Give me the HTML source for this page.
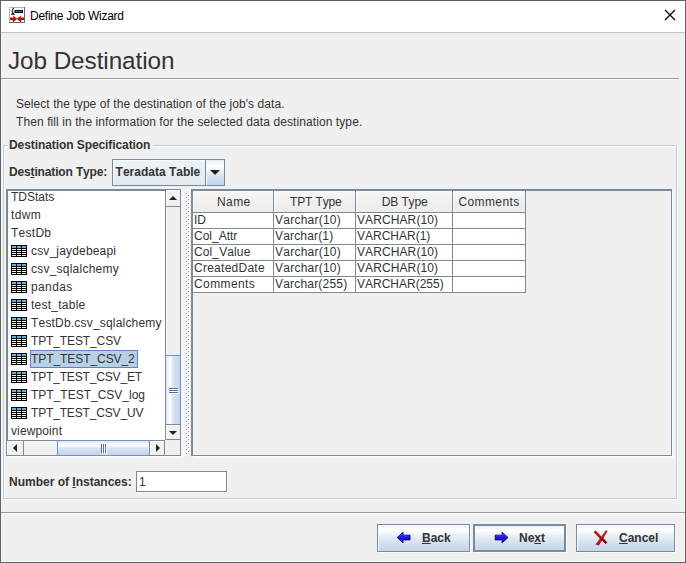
<!DOCTYPE html>
<html>
<head>
<meta charset="utf-8">
<title>Define Job Wizard</title>
<style>
html,body{margin:0;padding:0;}
body{font-kerning:none;width:686px;height:563px;overflow:hidden;background:#f0f0f0;font-family:"Liberation Sans",sans-serif;font-size:12px;color:#333;position:relative;}
.abs{position:absolute;}
#win{position:absolute;left:0;top:0;width:684px;height:561px;border:1px solid #626262;background:#f0f0f0;box-shadow:inset -1px -1px 0 #fff, inset 1px 0 0 #f8f8f8;}
#titlebar{position:absolute;left:1px;top:1px;width:684px;height:31px;background:#fff;border-bottom:1px solid #c4c4c4;}
#title{position:absolute;left:30px;top:9px;font-size:12px;color:#000;line-height:14px;white-space:nowrap;letter-spacing:-0.25px;}
#h1{position:absolute;left:8px;top:45.5px;font-size:24.3px;line-height:30px;color:#333;white-space:nowrap;letter-spacing:-0.07px;}
.hline{position:absolute;height:1px;background:#9a9a9a;box-shadow:0 1px 0 #fcfcfc;}
.t{position:absolute;white-space:nowrap;line-height:14px;font-size:12px;color:#333;}
.b{font-weight:bold;}
#group{position:absolute;left:3px;top:145px;width:674px;height:354px;box-sizing:border-box;border:1px solid #b8cfe5;box-shadow:inset 1px 1px 0 #fbfcfd, 1px 1px 0 #fbfcfd;}
#gtitle{position:absolute;left:8px;top:138px;background:#f0f0f0;padding:0 3px 0 1px;font-weight:bold;line-height:14px;letter-spacing:-0.08px;}
#combo{position:absolute;left:112px;top:159px;width:113px;height:27px;border:1px solid #7a8a99;box-sizing:border-box;background:linear-gradient(#eef2f7,#e8edf3 50%,#e3e9f0);box-shadow:inset 1px 1px 0 #f7f9fc;}
#combo .txt{position:absolute;left:2.6px;top:5px;font-weight:bold;line-height:14px;white-space:nowrap;}
#combo .btn{position:absolute;right:0;top:0;width:18px;height:25px;border-left:1px solid #7a8a99;background:linear-gradient(#e4ecf6,#fdfeff 25%,#dbe6f2 60%,#c3d5e9);box-shadow:inset 1px 0 0 #f4f8fc;}
#list{position:absolute;left:6px;top:189px;width:175px;height:267px;border:1px solid #7a8a99;box-sizing:border-box;background:#fff;box-shadow:inset 1px 1px 0 #7a8a99, 2px 2px 0 #f8f9fb;}
.li{position:absolute;left:4px;white-space:nowrap;line-height:14px;font-size:12px;color:#333;}
.ico{position:absolute;left:4px;width:16px;height:12px;}
#tablepane{position:absolute;left:191px;top:189px;width:481px;height:267px;border:1px solid #7a8a99;border-left-width:2px;border-top-width:2px;box-sizing:border-box;background:#f0f0f0;box-shadow:2px 2px 0 #f8f9fb;}
.btnx{position:absolute;top:524px;height:28px;box-sizing:border-box;border:1px solid #7a8a99;background:linear-gradient(#e9f0f8 0%,#ffffff 18%,#e6edf6 45%,#d3e0ee 70%,#c4d5e8 100%);box-shadow:inset 1px 1px 0 rgba(255,255,255,.9), 1px 1px 0 #fafbfc;}
.btnx.dflt{border:2px solid #7a8a99;box-shadow:1px 1px 0 #fafbfc;}
.btnx.dflt span{margin:-1px 0 0 -1px;}
.btnx span{position:absolute;top:6px;font-weight:bold;line-height:14px;white-space:nowrap;}

#listview{position:absolute;left:0;top:0;width:158px;height:250px;overflow:hidden;}
.sel{position:absolute;left:23px;width:108px;height:18px;box-sizing:border-box;background:#b8cfe5;border:1px solid #6382bf;}
.sb{position:absolute;box-sizing:border-box;}
.sbtn{position:absolute;box-sizing:border-box;background:#f0f0f0;border:1px solid #7a8a99;box-shadow:inset 1px 1px 0 #fff;}
.track{position:absolute;box-sizing:border-box;background:#f0f0f0;border:1px solid #7a8a99;box-shadow:inset 1px 1px 0 #fafafa;}
.thumbv{position:absolute;box-sizing:border-box;border:1px solid #7390c4;background:linear-gradient(to right,#dbe6f3 0%,#ffffff 30%,#d5e2f1 55%,#c3d5ea 100%);}
.thumbh{position:absolute;box-sizing:border-box;border:1px solid #7390c4;background:linear-gradient(to bottom,#dbe6f3 0%,#ffffff 30%,#d5e2f1 55%,#c3d5ea 100%);}
#divider{position:absolute;left:181px;top:189px;width:10px;height:267px;background:#f5f7f9;}
table.jt{position:absolute;left:0;top:0;border-collapse:collapse;table-layout:fixed;}
.cell{position:absolute;white-space:nowrap;line-height:14px;font-size:12px;color:#333;}
.vline{position:absolute;width:1px;background:#7a8a99;}
.hl{position:absolute;height:1px;background:#7a8a99;}
u{text-decoration:underline;}
</style>
</head>
<body>
<div id="win"></div>
<div id="titlebar"></div>
<svg class="abs" style="left:9px;top:7px" width="16" height="16" viewBox="9 7 16 16">
  <rect x="9" y="7" width="16" height="16" fill="#fff"/>
  <path d="M9.5 23 V7.5 H25" fill="none" stroke="#b4b4b4" stroke-width="1"/>
  <path d="M24.5 7 V22.5 H9" fill="none" stroke="#666" stroke-width="1"/>
  <rect x="14.5" y="10" width="8.5" height="3" fill="#05051e"/>
  <rect x="16" y="11" width="6" height="1" fill="#2f62ff"/>
  <path d="M14 8 C12.3 9.2 11.8 11 12.4 12.8" fill="none" stroke="#444" stroke-width="1.1"/>
  <path d="M13.6 9.5 L13.6 12.8" fill="none" stroke="#bbb" stroke-width="0.9"/>
  <path d="M10.8 14.8 L13 12.2 L15.2 14.8 Z" fill="#000"/>
  <path d="M10 17.6 L13.2 17.6 L13.2 15.6 L17 18.8 L20.8 15.6 L20.8 17.6 L24 17.6 L24 20 L20.8 20 L20.8 22 L17 18.9 L13.2 22 L13.2 20 L10 20 Z" fill="#cf1414"/>
  <path d="M10 19.3 L13.2 19.3 L13.2 21.6 L16.4 18.9 M24 19.3 L20.8 19.3 L20.8 21.6 L17.6 18.9" fill="none" stroke="#8e0505" stroke-width="0.8"/>
</svg>
<div id="title">Define Job Wizard</div>
<svg class="abs" style="left:664px;top:9px" width="12" height="12" viewBox="0 0 12 12"><path d="M1 1 L11 11 M11 1 L1 11" stroke="#000" stroke-width="1.25" fill="none"/></svg>

<div id="h1">Job Destination</div>
<div class="hline" style="left:1px;top:78px;width:678px;"></div>
<div class="t" style="left:16px;top:97px;letter-spacing:0.065px;">Select the type of the destination of the job's data.</div>
<div class="t" style="left:16px;top:115px;letter-spacing:0.09px;">Then fill in the information for the selected data destination type.</div>

<div id="group"></div>
<div id="gtitle">Destination Specification</div>
<div class="t b" style="left:9px;top:165px;letter-spacing:-0.15px;">Des<u>t</u>ination Type:</div>
<div id="combo"><div class="txt">Teradata Table</div><div class="btn"><svg class="abs" style="left:4px;top:10px" width="10" height="5"><path d="M0 0 L10 0 L5 5 Z" fill="#222"/></svg></div></div>

<div id="list"><div id="listview"><div class="li" style="left:4px;top:0px">TDStats</div>
<div class="li" style="left:4px;top:18px;letter-spacing:0.4px">tdwm</div>
<div class="li" style="left:4px;top:36px;letter-spacing:0.26px">TestDb</div>
<svg class="ico" style="top:55px" width="16" height="12" viewBox="0 0 16 12"><rect width="16" height="12" fill="#000"/><g fill="#5ab4ea"><rect x="1" y="1" width="4" height="2"/><rect x="6" y="1" width="4" height="2"/><rect x="11" y="1" width="4" height="2"/></g><g fill="#ffffc4"><rect x="1" y="4" width="4" height="1"/><rect x="6" y="4" width="4" height="1"/><rect x="11" y="4" width="4" height="1"/><rect x="1" y="6" width="4" height="1"/><rect x="6" y="6" width="4" height="1"/><rect x="11" y="6" width="4" height="1"/><rect x="1" y="8" width="4" height="1"/><rect x="6" y="8" width="4" height="1"/><rect x="11" y="8" width="4" height="1"/><rect x="1" y="10" width="4" height="1"/><rect x="6" y="10" width="4" height="1"/><rect x="11" y="10" width="4" height="1"/></g></svg>
<div class="li" style="left:24px;top:54px;letter-spacing:0.17px">csv_jaydebeapi</div>
<svg class="ico" style="top:73px" width="16" height="12" viewBox="0 0 16 12"><rect width="16" height="12" fill="#000"/><g fill="#5ab4ea"><rect x="1" y="1" width="4" height="2"/><rect x="6" y="1" width="4" height="2"/><rect x="11" y="1" width="4" height="2"/></g><g fill="#ffffc4"><rect x="1" y="4" width="4" height="1"/><rect x="6" y="4" width="4" height="1"/><rect x="11" y="4" width="4" height="1"/><rect x="1" y="6" width="4" height="1"/><rect x="6" y="6" width="4" height="1"/><rect x="11" y="6" width="4" height="1"/><rect x="1" y="8" width="4" height="1"/><rect x="6" y="8" width="4" height="1"/><rect x="11" y="8" width="4" height="1"/><rect x="1" y="10" width="4" height="1"/><rect x="6" y="10" width="4" height="1"/><rect x="11" y="10" width="4" height="1"/></g></svg>
<div class="li" style="left:24px;top:72px;letter-spacing:0.23px">csv_sqlalchemy</div>
<svg class="ico" style="top:91px" width="16" height="12" viewBox="0 0 16 12"><rect width="16" height="12" fill="#000"/><g fill="#5ab4ea"><rect x="1" y="1" width="4" height="2"/><rect x="6" y="1" width="4" height="2"/><rect x="11" y="1" width="4" height="2"/></g><g fill="#ffffc4"><rect x="1" y="4" width="4" height="1"/><rect x="6" y="4" width="4" height="1"/><rect x="11" y="4" width="4" height="1"/><rect x="1" y="6" width="4" height="1"/><rect x="6" y="6" width="4" height="1"/><rect x="11" y="6" width="4" height="1"/><rect x="1" y="8" width="4" height="1"/><rect x="6" y="8" width="4" height="1"/><rect x="11" y="8" width="4" height="1"/><rect x="1" y="10" width="4" height="1"/><rect x="6" y="10" width="4" height="1"/><rect x="11" y="10" width="4" height="1"/></g></svg>
<div class="li" style="left:24px;top:90px;letter-spacing:0.38px">pandas</div>
<svg class="ico" style="top:109px" width="16" height="12" viewBox="0 0 16 12"><rect width="16" height="12" fill="#000"/><g fill="#5ab4ea"><rect x="1" y="1" width="4" height="2"/><rect x="6" y="1" width="4" height="2"/><rect x="11" y="1" width="4" height="2"/></g><g fill="#ffffc4"><rect x="1" y="4" width="4" height="1"/><rect x="6" y="4" width="4" height="1"/><rect x="11" y="4" width="4" height="1"/><rect x="1" y="6" width="4" height="1"/><rect x="6" y="6" width="4" height="1"/><rect x="11" y="6" width="4" height="1"/><rect x="1" y="8" width="4" height="1"/><rect x="6" y="8" width="4" height="1"/><rect x="11" y="8" width="4" height="1"/><rect x="1" y="10" width="4" height="1"/><rect x="6" y="10" width="4" height="1"/><rect x="11" y="10" width="4" height="1"/></g></svg>
<div class="li" style="left:24px;top:108px;letter-spacing:0.25px">test_table</div>
<svg class="ico" style="top:127px" width="16" height="12" viewBox="0 0 16 12"><rect width="16" height="12" fill="#000"/><g fill="#5ab4ea"><rect x="1" y="1" width="4" height="2"/><rect x="6" y="1" width="4" height="2"/><rect x="11" y="1" width="4" height="2"/></g><g fill="#ffffc4"><rect x="1" y="4" width="4" height="1"/><rect x="6" y="4" width="4" height="1"/><rect x="11" y="4" width="4" height="1"/><rect x="1" y="6" width="4" height="1"/><rect x="6" y="6" width="4" height="1"/><rect x="11" y="6" width="4" height="1"/><rect x="1" y="8" width="4" height="1"/><rect x="6" y="8" width="4" height="1"/><rect x="11" y="8" width="4" height="1"/><rect x="1" y="10" width="4" height="1"/><rect x="6" y="10" width="4" height="1"/><rect x="11" y="10" width="4" height="1"/></g></svg>
<div class="li" style="left:24px;top:126px;letter-spacing:0.19px">TestDb.csv_sqlalchemy</div>
<svg class="ico" style="top:145px" width="16" height="12" viewBox="0 0 16 12"><rect width="16" height="12" fill="#000"/><g fill="#5ab4ea"><rect x="1" y="1" width="4" height="2"/><rect x="6" y="1" width="4" height="2"/><rect x="11" y="1" width="4" height="2"/></g><g fill="#ffffc4"><rect x="1" y="4" width="4" height="1"/><rect x="6" y="4" width="4" height="1"/><rect x="11" y="4" width="4" height="1"/><rect x="1" y="6" width="4" height="1"/><rect x="6" y="6" width="4" height="1"/><rect x="11" y="6" width="4" height="1"/><rect x="1" y="8" width="4" height="1"/><rect x="6" y="8" width="4" height="1"/><rect x="11" y="8" width="4" height="1"/><rect x="1" y="10" width="4" height="1"/><rect x="6" y="10" width="4" height="1"/><rect x="11" y="10" width="4" height="1"/></g></svg>
<div class="li" style="left:24px;top:144px;letter-spacing:-0.12px">TPT_TEST_CSV</div>
<svg class="ico" style="top:163px" width="16" height="12" viewBox="0 0 16 12"><rect width="16" height="12" fill="#000"/><g fill="#5ab4ea"><rect x="1" y="1" width="4" height="2"/><rect x="6" y="1" width="4" height="2"/><rect x="11" y="1" width="4" height="2"/></g><g fill="#ffffc4"><rect x="1" y="4" width="4" height="1"/><rect x="6" y="4" width="4" height="1"/><rect x="11" y="4" width="4" height="1"/><rect x="1" y="6" width="4" height="1"/><rect x="6" y="6" width="4" height="1"/><rect x="11" y="6" width="4" height="1"/><rect x="1" y="8" width="4" height="1"/><rect x="6" y="8" width="4" height="1"/><rect x="11" y="8" width="4" height="1"/><rect x="1" y="10" width="4" height="1"/><rect x="6" y="10" width="4" height="1"/><rect x="11" y="10" width="4" height="1"/></g></svg>
<div class="sel" style="top:160px"></div>
<div class="li" style="left:24px;top:162px;letter-spacing:-0.07px">TPT_TEST_CSV_2</div>
<svg class="ico" style="top:181px" width="16" height="12" viewBox="0 0 16 12"><rect width="16" height="12" fill="#000"/><g fill="#5ab4ea"><rect x="1" y="1" width="4" height="2"/><rect x="6" y="1" width="4" height="2"/><rect x="11" y="1" width="4" height="2"/></g><g fill="#ffffc4"><rect x="1" y="4" width="4" height="1"/><rect x="6" y="4" width="4" height="1"/><rect x="11" y="4" width="4" height="1"/><rect x="1" y="6" width="4" height="1"/><rect x="6" y="6" width="4" height="1"/><rect x="11" y="6" width="4" height="1"/><rect x="1" y="8" width="4" height="1"/><rect x="6" y="8" width="4" height="1"/><rect x="11" y="8" width="4" height="1"/><rect x="1" y="10" width="4" height="1"/><rect x="6" y="10" width="4" height="1"/><rect x="11" y="10" width="4" height="1"/></g></svg>
<div class="li" style="left:24px;top:180px;letter-spacing:-0.16px">TPT_TEST_CSV_ET</div>
<svg class="ico" style="top:199px" width="16" height="12" viewBox="0 0 16 12"><rect width="16" height="12" fill="#000"/><g fill="#5ab4ea"><rect x="1" y="1" width="4" height="2"/><rect x="6" y="1" width="4" height="2"/><rect x="11" y="1" width="4" height="2"/></g><g fill="#ffffc4"><rect x="1" y="4" width="4" height="1"/><rect x="6" y="4" width="4" height="1"/><rect x="11" y="4" width="4" height="1"/><rect x="1" y="6" width="4" height="1"/><rect x="6" y="6" width="4" height="1"/><rect x="11" y="6" width="4" height="1"/><rect x="1" y="8" width="4" height="1"/><rect x="6" y="8" width="4" height="1"/><rect x="11" y="8" width="4" height="1"/><rect x="1" y="10" width="4" height="1"/><rect x="6" y="10" width="4" height="1"/><rect x="11" y="10" width="4" height="1"/></g></svg>
<div class="li" style="left:24px;top:198px">TPT_TEST_CSV_log</div>
<svg class="ico" style="top:217px" width="16" height="12" viewBox="0 0 16 12"><rect width="16" height="12" fill="#000"/><g fill="#5ab4ea"><rect x="1" y="1" width="4" height="2"/><rect x="6" y="1" width="4" height="2"/><rect x="11" y="1" width="4" height="2"/></g><g fill="#ffffc4"><rect x="1" y="4" width="4" height="1"/><rect x="6" y="4" width="4" height="1"/><rect x="11" y="4" width="4" height="1"/><rect x="1" y="6" width="4" height="1"/><rect x="6" y="6" width="4" height="1"/><rect x="11" y="6" width="4" height="1"/><rect x="1" y="8" width="4" height="1"/><rect x="6" y="8" width="4" height="1"/><rect x="11" y="8" width="4" height="1"/><rect x="1" y="10" width="4" height="1"/><rect x="6" y="10" width="4" height="1"/><rect x="11" y="10" width="4" height="1"/></g></svg>
<div class="li" style="left:24px;top:216px;letter-spacing:-0.16px">TPT_TEST_CSV_UV</div>
<div class="li" style="left:4px;top:234px;letter-spacing:0.12px">viewpoint</div></div>
<!--SCROLLBARS--></div>

<!-- vertical scrollbar -->
<div class="track" style="left:165px;top:189px;width:16px;height:251px;"></div>
<div class="sbtn" style="left:165px;top:189px;width:16px;height:18px;"><svg class="abs" style="left:3px;top:6px" width="8" height="4"><path d="M0 4 L4 0 L8 4 Z" fill="#222"/></svg></div>
<div class="thumbv" style="left:165px;top:355px;width:16px;height:70px;"><svg class="abs" style="left:3px;top:32px" width="10" height="6"><path d="M1 1.5H10M1 3.5H10M1 5.5H10" stroke="#fff" stroke-width="1"/><path d="M0 0.5H9M0 2.5H9M0 4.5H9" stroke="#5b6f9f" stroke-width="1"/></svg></div>
<div class="sbtn" style="left:165px;top:424px;width:16px;height:16px;"><svg class="abs" style="left:3px;top:6px" width="8" height="4"><path d="M0 0 L8 0 L4 4 Z" fill="#222"/></svg></div>
<!-- horizontal scrollbar -->
<div class="track" style="left:6px;top:440px;width:159px;height:16px;"></div>
<div class="sbtn" style="left:6px;top:440px;width:18px;height:16px;"><svg class="abs" style="left:6px;top:3px" width="4" height="8"><path d="M4 0 L4 8 L0 4 Z" fill="#222"/></svg></div>
<div class="thumbh" style="left:57px;top:440px;width:93px;height:16px;"><svg class="abs" style="left:43px;top:3px" width="6" height="10"><path d="M1.5 1V10M3.5 1V10M5.5 1V10" stroke="#fff" stroke-width="1"/><path d="M0.5 0V9M2.5 0V9M4.5 0V9" stroke="#5b6f9f" stroke-width="1"/></svg></div>
<div class="sbtn" style="left:149px;top:440px;width:16px;height:16px;"><svg class="abs" style="left:6px;top:3px" width="4" height="8"><path d="M0 0 L0 8 L4 4 Z" fill="#222"/></svg></div>
<div class="abs" style="left:165px;top:440px;width:15px;height:15px;background:#f0f0f0;"></div>
<!-- divider -->
<div id="divider"><svg class="abs" style="left:0;top:0" width="10" height="267"><defs><pattern id="dots" x="0" y="0" width="10" height="4" patternUnits="userSpaceOnUse"><rect x="5" y="0" width="1" height="1" fill="#8e8e8e"/><rect x="7" y="2" width="1" height="1" fill="#8e8e8e"/></pattern></defs><rect x="0" y="4" width="10" height="262" fill="url(#dots)"/></svg></div>
<div id="tablepane"><div class="abs" style="left:0;top:0;width:333px;height:21px;background:linear-gradient(#f6f6f6,#f0f0f0 50%,#ececec);"></div><div class="abs" style="left:0px;top:0;width:1px;height:21px;background:#fdfdfd;"></div><div class="abs" style="left:81px;top:0;width:1px;height:21px;background:#fdfdfd;"></div><div class="abs" style="left:163px;top:0;width:1px;height:21px;background:#fdfdfd;"></div><div class="abs" style="left:260px;top:0;width:1px;height:21px;background:#fdfdfd;"></div><div class="abs" style="left:0;top:0;width:333px;height:1px;background:#fdfdfd;"></div>
<div class="abs" style="left:0;top:21px;width:333px;height:81px;background:#fff;"></div>
<div class="vline" style="left:80px;top:0;height:102px;"></div>
<div class="vline" style="left:162px;top:0;height:102px;"></div>
<div class="vline" style="left:259px;top:0;height:102px;"></div>
<div class="vline" style="left:332px;top:0;height:102px;"></div>
<div class="hl" style="left:0;top:21px;width:333px;"></div>
<div class="hl" style="left:0;top:37px;width:333px;"></div>
<div class="hl" style="left:0;top:53px;width:333px;"></div>
<div class="hl" style="left:0;top:69px;width:333px;"></div>
<div class="hl" style="left:0;top:85px;width:333px;"></div>
<div class="hl" style="left:0;top:101px;width:333px;"></div>
<div class="cell" style="left:0.8px;top:4px;width:80px;text-align:center;letter-spacing:0.45px;">Name</div>
<div class="cell" style="left:82.3px;top:4px;width:81px;text-align:center;letter-spacing:-0.15px;">TPT Type</div>
<div class="cell" style="left:163.7px;top:4px;width:96px;text-align:center;letter-spacing:-0.1px;">DB Type</div>
<div class="cell" style="left:260px;top:4px;width:72px;text-align:center;letter-spacing:0.4px;">Comments</div>
<div class="cell" style="left:1px;top:22px;">ID</div>
<div class="cell" style="left:82px;top:22px;letter-spacing:0.24px;">Varchar(10)</div>
<div class="cell" style="left:164px;top:22px;letter-spacing:0.1px;">VARCHAR(10)</div>
<div class="cell" style="left:1px;top:38px;">Col_Attr</div>
<div class="cell" style="left:82px;top:38px;letter-spacing:0.17px;">Varchar(1)</div>
<div class="cell" style="left:164px;top:38px;">VARCHAR(1)</div>
<div class="cell" style="left:1px;top:54px;letter-spacing:0.12px;">Col_Value</div>
<div class="cell" style="left:82px;top:54px;letter-spacing:0.24px;">Varchar(10)</div>
<div class="cell" style="left:164px;top:54px;letter-spacing:0.1px;">VARCHAR(10)</div>
<div class="cell" style="left:1px;top:70px;letter-spacing:0.26px;">CreatedDate</div>
<div class="cell" style="left:82px;top:70px;letter-spacing:0.24px;">Varchar(10)</div>
<div class="cell" style="left:164px;top:70px;letter-spacing:0.1px;">VARCHAR(10)</div>
<div class="cell" style="left:1px;top:86px;letter-spacing:0.4px;">Comments</div>
<div class="cell" style="left:82px;top:86px;letter-spacing:0.19px;">Varchar(255)</div>
<div class="cell" style="left:164px;top:86px;">VARCHAR(255)</div></div>

<div class="t b" style="left:9px;top:475px;">Number of <u>I</u>nstances:</div>
<div class="abs" style="left:136px;top:471px;width:91px;height:21px;box-sizing:border-box;border:1px solid #7a8a99;background:#fff;box-shadow:1px 1px 0 #fbfbfb;"><div class="t" style="left:2px;top:3px;">1</div></div>

<div class="hline" style="left:1px;top:512px;width:684px;"></div>

<div class="btnx" style="left:377px;width:93px;"><span style="left:44px;"><u>B</u>ack</span></div>
<div class="btnx dflt" style="left:473px;width:93px;"><span style="left:45px;">Ne<u>x</u>t</span></div>
<div class="btnx" style="left:576px;width:99px;"><span style="left:42px;"><u>C</u>ancel</span></div>
<svg class="abs" style="left:390px;top:526px" width="30" height="24" viewBox="390 526 30 24">
  <path d="M397.2 537.5 L403 532.2 L403 535.2 L410 535.2 L410 539.9 L403 539.9 L403 542.9 Z" fill="#1616e8" stroke="#050560" stroke-width="0.9" stroke-linejoin="miter"/>
  <path d="M398.5 537.2 L402.3 533.8 L402.3 536 L409.3 536" fill="none" stroke="#4a4af4" stroke-width="0.8"/>
</svg>
<svg class="abs" style="left:488px;top:526px" width="30" height="24" viewBox="488 526 30 24">
  <path d="M508 537.5 L502.1 532.2 L502.1 535.2 L495.2 535.2 L495.2 539.9 L502.1 539.9 L502.1 542.9 Z" fill="#1616e8" stroke="#050560" stroke-width="0.9" stroke-linejoin="miter"/>
  <path d="M496 536 L502.8 536 L502.8 534 L506.6 537.3" fill="none" stroke="#4a4af4" stroke-width="0.8"/>
</svg>
<svg class="abs" style="left:588px;top:526px" width="26" height="24" viewBox="588 526 26 24">
  <path d="M593.7 531.9 L595.5 530.5 L607.4 542.2 L605.6 543.9 Z" fill="#c21313"/>
  <path d="M606.1 530.1 L607.3 531 L598.6 545.6 L595.4 544.4 Z" fill="#d31a1a"/>
  <path d="M594 532.2 L605.8 543.8 M598.4 545.4 L607.2 531.2" fill="none" stroke="#5e0404" stroke-width="0.8" stroke-opacity="0.75"/>
  <path d="M601.5 538.2 L606.3 543" fill="none" stroke="#4a0202" stroke-width="1.4" stroke-opacity="0.6"/>
</svg>
</body>
</html>
